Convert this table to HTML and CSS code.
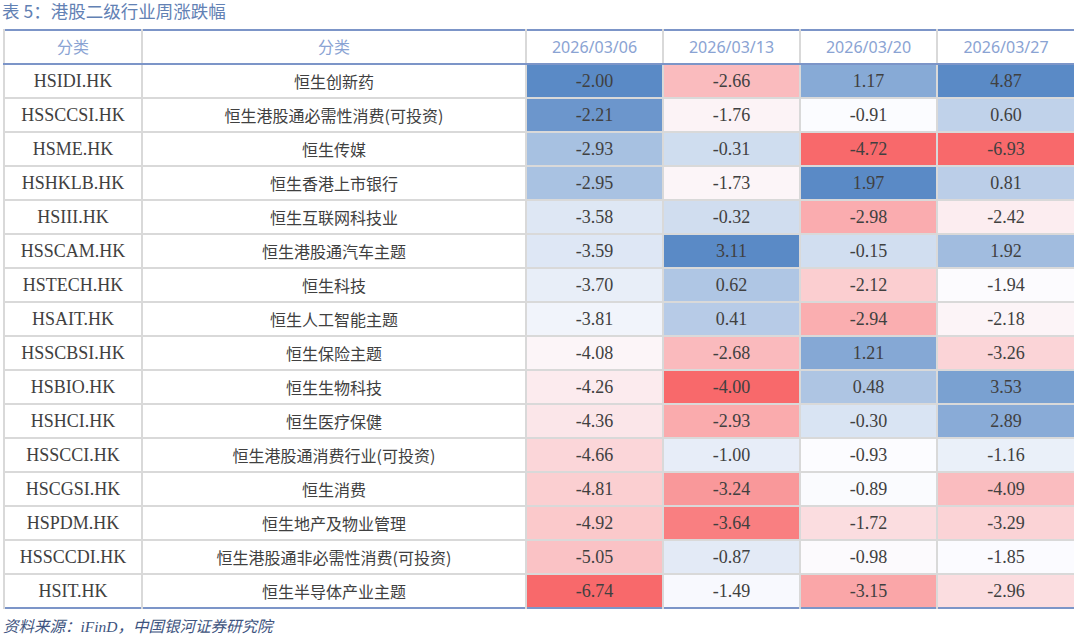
FILE: index.html
```html
<!DOCTYPE html>
<html lang="zh-CN">
<head>
<meta charset="utf-8">
<title>港股二级行业周涨跌幅</title>
<link rel="stylesheet" href="styles.css">
</head>
<body>
<div class="page">
  <div class="caption">表 5：港股二级行业周涨跌幅</div>
  <table class="grid">
    <colgroup>
      <col class="c-code"><col class="c-name"><col class="c-val"><col class="c-val"><col class="c-val"><col class="c-val">
    </colgroup>
    <thead>
      <tr><th>分类</th><th>分类</th><th>2026/03/06</th><th>2026/03/13</th><th>2026/03/20</th><th>2026/03/27</th></tr>
    </thead>
    <tbody>
      <tr><td class="code">HSIDI.HK</td><td class="name">恒生创新药</td><td class="num" style="background:#5a8ac6">-2.00</td><td class="num" style="background:#fabbbe">-2.66</td><td class="num" style="background:#87aad6">1.17</td><td class="num" style="background:#5a8ac6">4.87</td></tr>
      <tr><td class="code">HSSCCSI.HK</td><td class="name">恒生港股通必需性消费(可投资)</td><td class="num" style="background:#6c96cc">-2.21</td><td class="num" style="background:#fcf3f6">-1.76</td><td class="num" style="background:#fbfcff">-0.91</td><td class="num" style="background:#c0d2ea">0.60</td></tr>
      <tr><td class="code">HSME.HK</td><td class="name">恒生传媒</td><td class="num" style="background:#a7c1e1">-2.93</td><td class="num" style="background:#cfddef">-0.31</td><td class="num" style="background:#f8696b">-4.72</td><td class="num" style="background:#f8696b">-6.93</td></tr>
      <tr><td class="code">HSHKLB.HK</td><td class="name">恒生香港上市银行</td><td class="num" style="background:#a9c2e2">-2.95</td><td class="num" style="background:#fcf5f8">-1.73</td><td class="num" style="background:#5a8ac6">1.97</td><td class="num" style="background:#bbcee8">0.81</td></tr>
      <tr><td class="code">HSIII.HK</td><td class="name">恒生互联网科技业</td><td class="num" style="background:#dee7f4">-3.58</td><td class="num" style="background:#d0ddef">-0.32</td><td class="num" style="background:#faacaf">-2.98</td><td class="num" style="background:#fcedf0">-2.42</td></tr>
      <tr><td class="code">HSSCAM.HK</td><td class="name">恒生港股通汽车主题</td><td class="num" style="background:#dee7f5">-3.59</td><td class="num" style="background:#5a8ac6">3.11</td><td class="num" style="background:#d1def0">-0.15</td><td class="num" style="background:#a1bcdf">1.92</td></tr>
      <tr><td class="code">HSTECH.HK</td><td class="name">恒生科技</td><td class="num" style="background:#e8eef8">-3.70</td><td class="num" style="background:#afc6e4">0.62</td><td class="num" style="background:#fbced0">-2.12</td><td class="num" style="background:#fcfbfe">-1.94</td></tr>
      <tr><td class="code">HSAIT.HK</td><td class="name">恒生人工智能主题</td><td class="num" style="background:#f1f4fb">-3.81</td><td class="num" style="background:#b7cbe7">0.41</td><td class="num" style="background:#faaeb0">-2.94</td><td class="num" style="background:#fcf4f7">-2.18</td></tr>
      <tr><td class="code">HSSCBSI.HK</td><td class="name">恒生保险主题</td><td class="num" style="background:#fcf5f8">-4.08</td><td class="num" style="background:#fababd">-2.68</td><td class="num" style="background:#85a8d5">1.21</td><td class="num" style="background:#fbd4d7">-3.26</td></tr>
      <tr><td class="code">HSBIO.HK</td><td class="name">恒生生物科技</td><td class="num" style="background:#fcebee">-4.26</td><td class="num" style="background:#f8696b">-4.00</td><td class="num" style="background:#aec5e3">0.48</td><td class="num" style="background:#7aa1d1">3.53</td></tr>
      <tr><td class="code">HSHCI.HK</td><td class="name">恒生医疗保健</td><td class="num" style="background:#fbe6e9">-4.36</td><td class="num" style="background:#faabad">-2.93</td><td class="num" style="background:#d9e4f3">-0.30</td><td class="num" style="background:#89abd7">2.89</td></tr>
      <tr><td class="code">HSSCCI.HK</td><td class="name">恒生港股通消费行业(可投资)</td><td class="num" style="background:#fbd6d9">-4.66</td><td class="num" style="background:#e7edf8">-1.00</td><td class="num" style="background:#fcfcff">-0.93</td><td class="num" style="background:#eaf0f9">-1.16</td></tr>
      <tr><td class="code">HSCGSI.HK</td><td class="name">恒生消费</td><td class="num" style="background:#fbcfd1">-4.81</td><td class="num" style="background:#f9989a">-3.24</td><td class="num" style="background:#fafbfe">-0.89</td><td class="num" style="background:#fabcbf">-4.09</td></tr>
      <tr><td class="code">HSPDM.HK</td><td class="name">恒生地产及物业管理</td><td class="num" style="background:#fbc9cb">-4.92</td><td class="num" style="background:#f97f81">-3.64</td><td class="num" style="background:#fbdde0">-1.72</td><td class="num" style="background:#fbd3d6">-3.29</td></tr>
      <tr><td class="code">HSSCCDI.HK</td><td class="name">恒生港股通非必需性消费(可投资)</td><td class="num" style="background:#fac2c5">-5.05</td><td class="num" style="background:#e3eaf6">-0.87</td><td class="num" style="background:#fcfafd">-0.98</td><td class="num" style="background:#fbfbff">-1.85</td></tr>
      <tr><td class="code">HSIT.HK</td><td class="name">恒生半导体产业主题</td><td class="num" style="background:#f8696b">-6.74</td><td class="num" style="background:#f8f9fe">-1.49</td><td class="num" style="background:#faa6a8">-3.15</td><td class="num" style="background:#fbdde0">-2.96</td></tr>
    </tbody>
  </table>
  <div class="source">资料来源：iFinD，中国银河证券研究院</div>
</div>
</body>
</html>
```
FILE: styles.css
```css
html, body {
  margin: 0;
  padding: 0;
  background: #ffffff;
}

.page {
  padding: 0 0 0 3px;
}

.caption {
  font-family: "Noto Sans CJK SC", "Noto Sans", sans-serif;
  font-size: 17.5px;
  line-height: 22px;
  color: #6281b4;
  margin: 0 0 7px -1px;
  font-weight: 400;
}

.grid {
  border-collapse: collapse;
  table-layout: fixed;
  width: 1071px;
  border-top: 2px solid #7c95c8;
  border-bottom: 2px solid #7c95c8;
}

.c-code { width: 138px; }
.c-name { width: 384px; }
.c-val { width: 137px; }

.grid th,
.grid td {
  padding: 0;
  text-align: center;
  border: 2px solid #d9d9d9;
  white-space: nowrap;
}

.grid tr > :first-child { border-left: 2px solid #d9d9d9; }
.grid tr > :last-child { border-right: 0; }
.grid thead th { border-top: 0; }
.grid tbody tr:last-child td { border-bottom: 0; }

.grid th {
  height: 32px;
  line-height: 32px;
  font-weight: 400;
  font-size: 16px;
  color: #8aa3d3;
  font-family: "Noto Sans", "Noto Sans CJK SC", sans-serif;
  border-bottom: 2px solid #7c95c8;
}

.grid td {
  height: 32px;
  line-height: 31px;
  padding-top: 1px;
  box-sizing: border-box;
  color: #404040;
}

.code,
.num {
  font-family: "Liberation Serif", serif;
  font-size: 18px;
}

.name {
  font-family: "Noto Sans CJK SC", sans-serif;
  font-size: 16px;
  color: #454545;
}

.source {
  margin-top: 8px;
  font-family: "Liberation Serif", "Noto Sans CJK SC", serif;
  font-style: italic;
  font-size: 15.5px;
  line-height: 20px;
  color: #3e5480;
}
```
